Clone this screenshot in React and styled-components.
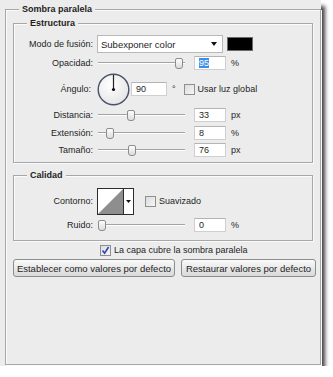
import React from 'react'
import styled, { createGlobalStyle } from 'styled-components'

const Global = createGlobalStyle`
  html, body { margin: 0; padding: 0; background: #fff; }
  body {
    font-family: "Liberation Sans", Arial, sans-serif;
    font-size: 9px;
    color: #1e1e1e;
  }
`

const Panel = styled.div`
  box-sizing: border-box;
  width: 321px;
  height: 366px;
  padding: 3px 0 1px 5px;
  background: #ececec;
  box-shadow: 4px 6px 4px rgba(0, 0, 0, 0.75);
  display: flex;
`

const Group = styled.fieldset`
  box-sizing: border-box;
  width: ${p => p.$w}px;
  margin: ${p => p.$m || '0'};
  padding: 0 0 ${p => p.$pb || 0}px;
  border: 1px solid #a7a7a7;
  box-shadow: inset 1px 1px 0 #fbfbfb, 1px 1px 0 #fbfbfb;
  min-width: 0;
  display: flex;
  flex-direction: column;
`

const Legend = styled.legend`
  margin-left: 13px;
  padding: 0 3px;
  font-weight: bold;
  line-height: 12px;
  background: #ececec;
`

const Row = styled.div`
  display: flex;
  align-items: center;
  height: ${p => p.$h}px;
  margin-top: ${p => p.$mt || 0}px;
  padding-left: ${p => p.$pl || 0}px;
`

const Label = styled.div`
  flex: none;
  box-sizing: border-box;
  width: 83px;
  padding-right: ${p => p.$pr || 4}px;
  text-align: right;
`

const Select = styled.div`
  box-sizing: border-box;
  width: 126px;
  height: 18px;
  border: 1px solid #b9b9b9;
  background: #fff;
  display: flex;
  align-items: center;
  justify-content: space-between;
  padding: 0 5px 0 3px;
  font-size: 9.5px;
`

const Arrow = styled.span`
  width: 0;
  height: 0;
  border-left: 3.5px solid transparent;
  border-right: 3.5px solid transparent;
  border-top: 4px solid #111;
`

const Swatch = styled.div`
  box-sizing: border-box;
  width: 26px;
  height: 14px;
  margin-left: 4px;
  background: #000;
  border: 1px solid #6a6a6a;
`

const Track = styled.div`
  position: relative;
  flex: none;
  width: 87px;
  height: 12px;
  margin-left: 1px;
  &::before {
    content: '';
    position: absolute;
    left: 0;
    right: 0;
    top: 5px;
    height: 1px;
    background: #a3a3a3;
    box-shadow: 0 1px 0 #fff;
  }
`

const Thumb = styled.div`
  position: absolute;
  top: 1px;
  width: 6px;
  height: 9px;
  border: 1px solid #8c8c8c;
  border-radius: 2px 2px 3px 3px;
  background: linear-gradient(#fdfdfd, #dcdcdc);
`

const Input = styled.div`
  box-sizing: border-box;
  flex: none;
  width: ${p => p.$w || 32}px;
  height: 14px;
  margin-left: ${p => p.$ml ?? 9}px;
  padding-left: 4px;
  border: 1px solid #cfcfcf;
  border-top-color: #b4b4b4;
  background: #fff;
  line-height: 12px;
`

const Picked = styled.span`
  background: #3d8ee6;
  color: #fff;
`

const Unit = styled.span`
  margin-left: ${p => p.$ml || 5}px;
  color: #1e1e1e;
`

const Box = styled.span`
  box-sizing: border-box;
  flex: none;
  width: 11px;
  height: 11px;
  margin-left: ${p => p.$ml || 0}px;
  margin-right: 3px;
  border: 1px solid #8f8f8f;
  background: linear-gradient(135deg, #dcdcdc, #f6f6f6);
  display: flex;
  align-items: center;
  justify-content: center;
`

const Button = styled.div`
  box-sizing: border-box;
  width: ${p => p.$w}px;
  height: 18px;
  margin-left: ${p => p.$ml}px;
  border: 1px solid #8d8d8d;
  border-radius: 3px;
  background: linear-gradient(#fafafa, #e9e9e9 50%, #d9d9d9);
  display: flex;
  align-items: center;
  justify-content: center;
  font-size: 9.5px;
`

const Slider = ({ value }) => (
  <Track>
    <Thumb style={{ left: Math.round(value * 81) }} />
  </Track>
)

const Check = ({ checked, ml }) => (
  <Box $ml={ml}>
    {checked && (
      <svg width="9" height="9" viewBox="0 0 9 9">
        <path d="M1.5 4.5 L3.6 7.2 L7.6 1" fill="none" stroke="#2b45b8" strokeWidth="1.6" />
      </svg>
    )}
  </Box>
)

const Dial = () => (
  <svg width="33" height="33" viewBox="0 0 33 33">
    <defs>
      <radialGradient id="dialfill" cx="0.4" cy="0.35" r="0.7">
        <stop offset="0" stopColor="#ffffff" />
        <stop offset="1" stopColor="#e4e4e4" />
      </radialGradient>
    </defs>
    <circle cx="16.5" cy="16.5" r="15.3" fill="url(#dialfill)" stroke="#48516a" strokeWidth="1.4" />
    <line x1="16.5" y1="16.5" x2="16.5" y2="2" stroke="#222" strokeWidth="1.2" />
    <circle cx="16.5" cy="16.5" r="1.6" fill="#111" />
  </svg>
)

const Contour = () => (
  <svg width="37" height="27" viewBox="0 0 37 27">
    <rect x="0.5" y="0.5" width="36" height="26" fill="#fff" stroke="#2c2c2c" />
    <path d="M1 26 L26 1 L26 26 Z" fill="#8e8e8e" />
    <line x1="26.5" y1="1" x2="26.5" y2="26" stroke="#2c2c2c" />
    <path d="M29 12 L34 12 L31.5 15 Z" fill="#111" />
  </svg>
)

const SliderRow = ({ label, value, pos, unit, h, picked }) => (
  <Row $h={h}>
    <Label>{label}</Label>
    <Slider value={pos} />
    <Input>{picked ? <Picked>{value}</Picked> : value}</Input>
    <Unit>{unit}</Unit>
  </Row>
)

export default function App() {
  return (
    <>
      <Global />
      <Panel>
        <Group $w={316}>
          <Legend>Sombra paralela</Legend>
          <Group $w={300} $m="2px 0 0 7px" $pb={4}>
            <Legend>Estructura</Legend>
            <Row $h={18} $mt={6}>
              <Label>Modo de fusión:</Label>
              <Select>
                Subexponer color
                <Arrow />
              </Select>
              <Swatch />
            </Row>
            <SliderRow h={19} label="Opacidad:" pos={0.95} value="95" unit="%" picked />
            <Row $h={34}>
              <Label $pr={6}>Ángulo:</Label>
              <Dial />
              <Input $w={36} $ml={1}>90</Input>
              <Unit $ml={5}>°</Unit>
              <Check ml={8} />
              Usar luz global
            </Row>
            <SliderRow h={18} label="Distancia:" pos={0.36} value="33" unit="px" />
            <SliderRow h={17} label="Extensión:" pos={0.1} value="8" unit="%" />
            <SliderRow h={17} label="Tamaño:" pos={0.37} value="76" unit="px" />
          </Group>
          <Group $w={300} $m="6px 0 0 7px" $pb={4}>
            <Legend>Calidad</Legend>
            <Row $h={26} $mt={7}>
              <Label>Contorno:</Label>
              <Contour />
              <Check ml={11} />
              Suavizado
            </Row>
            <SliderRow h={22} label="Ruido:" pos={0} value="0" unit="%" />
          </Group>
          <Row $h={14} $mt={2} $pl={94}>
            <Check checked />
            La capa cubre la sombra paralela
          </Row>
          <Row $h={18} $mt={2}>
            <Button $w={162} $ml={7}>Establecer como valores por defecto</Button>
            <Button $w={135} $ml={6}>Restaurar valores por defecto</Button>
          </Row>
        </Group>
      </Panel>
    </>
  )
}
